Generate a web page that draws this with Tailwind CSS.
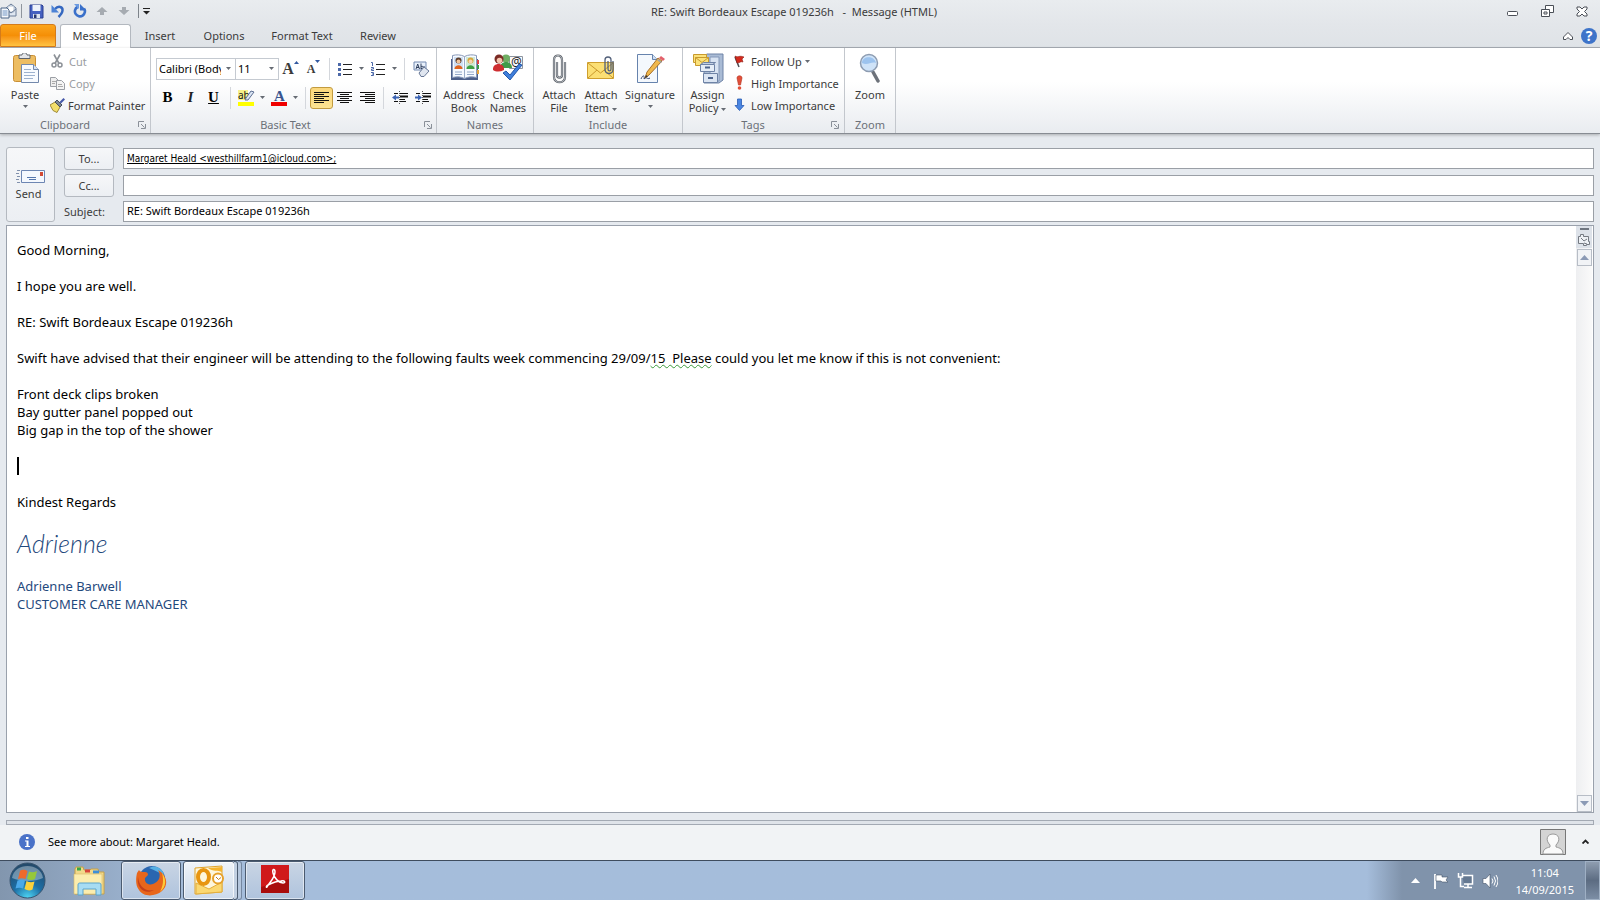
<!DOCTYPE html>
<html lang="en">
<head>
    <meta charset="UTF-8">
    <meta name="viewport" content="width=device-width, initial-scale=1.0">
    <title>RE: Swift Bordeaux Escape 019236h - Message (HTML)</title>
    <script src="https://cdn.jsdelivr.net/npm/@tailwindcss/browser@4"></script>
</head>
<body class="h-screen flex flex-col overflow-hidden bg-[#e6eaef] font-['Noto_Sans','Open_Sans',sans-serif] text-[11px] leading-[13px] text-[#3b3b3b]">
    <!-- Shared shapes -->
    <svg class="hidden">
        <symbol id="caret" viewBox="0 0 5 3"><path d="M0 0h5L2.500 3z" fill="#666b73"/></symbol>
        <symbol id="launcher" viewBox="0 0 8 8"><path d="M.5 6V.5H6" fill="none" stroke="#8a9099"/><path d="M3 3l3.500 3.500" stroke="#8a9099"/><path d="M7.500 3v4.500H3" fill="none" stroke="#8a9099"/></symbol>
    </svg>

    <!-- Title bar -->
    <header class="flex h-6 shrink-0 items-center bg-linear-to-b from-[#e9ecef] to-[#e3e6ea] pb-0.5">
        <div class="flex flex-1 items-center">
            <svg class="w-[17px] h-4" viewBox="0 0 17 16"><path d="M6 5l5-4 5 4v8H6z" fill="#dfe7f2" stroke="#6a7c98"/><path d="M8 3h6v6H8z" fill="#fff" stroke="#9aa9bf" stroke-width=".7"/><path d="M6 6l5 4 5-4" fill="none" stroke="#6a7c98"/><path d="M1 5h6l2 2v8H1z" fill="#f5f8fc" stroke="#4d6688"/><path d="M2.500 8h5M2.500 10h5M2.500 12h5" stroke="#6f94c4"/></svg>
            <span class="ml-1 mr-[3px] h-3.5 w-px bg-[#8f959d]"></span>
            <button class="w-[22px] flex justify-center" aria-label="Save"><svg class="size-[15px]" viewBox="0 0 15 15"><path d="M1 1h12l1 1v12H1z" fill="#4560c0" stroke="#2b3e90"/><path d="M3.500 1h8v6h-8z" fill="#eef3fb"/><path d="M4 10h7v4H4z" fill="#dce3ef"/><path d="M5 10.500h2.500V14H5z" fill="#27366f"/></svg></button>
            <button class="w-[22px] flex justify-center" aria-label="Undo"><svg class="size-[14px]" viewBox="0 0 14 14"><path d="M4 5C7 1.500 12 2.500 11.500 6.500 11.300 9 9 11.500 7.500 13" fill="none" stroke="#3568c0" stroke-width="2.500"/><path d="M.5 1v7.500H8z" fill="#4d83d6"/></svg></button>
            <button class="w-[22px] flex justify-center" aria-label="Repeat"><svg class="size-[14px]" viewBox="0 0 14 14"><path d="M4.500 3A5 5 0 1 0 11 4.500" fill="none" stroke="#3a70ca" stroke-width="2.600"/><path d="M7 0v6.500h6.500z" fill="#3a70ca"/><path d="M1 0h5v5z" fill="#6b9ae0"/></svg></button>
            <button class="w-[22px] flex justify-center" aria-label="Previous item"><svg class="size-[12px]" viewBox="0 0 12 12"><path d="M6 2l5.500 5H8v3H4V7H.5z" fill="#a6abb1"/></svg></button>
            <button class="w-[22px] flex justify-center" aria-label="Next item"><svg class="size-[12px]" viewBox="0 0 12 12"><path d="M6 10L.5 5H4V2h4v3h3.500z" fill="#a6abb1"/></svg></button>
            <span class="ml-[3px] h-3.5 w-px bg-[#7d838a]"></span>
            <button class="ml-1" aria-label="Customise toolbar"><svg class="w-[7px] h-[7px]" viewBox="0 0 7 7"><path d="M0 .5h7" stroke="#222"/><path d="M0 3h7L3.500 6.500z" fill="#222"/></svg></button>
        </div>
        <h1 class="whitespace-pre">RE: Swift Bordeaux Escape 019236h   -  Message (HTML)</h1>
        <div class="flex flex-1 items-center justify-end gap-[22px] pr-3">
            <button aria-label="Minimise"><svg class="w-[13px] h-3" viewBox="0 0 13 12"><rect x="1.500" y="6.500" width="10" height="4" rx="1" fill="#fff" stroke="#4a4f57"/></svg></button>
            <button aria-label="Restore"><svg class="w-[13px] h-3" viewBox="0 0 13 12"><path d="M4.500.5h8v7h-8z" fill="#fff" stroke="#4a4f57"/><path d="M.5 4.500h8v7h-8z" fill="#fff" stroke="#4a4f57"/><path d="M3 7h3v2H3z" fill="none" stroke="#4a4f57"/></svg></button>
            <button aria-label="Close"><svg class="w-[12px] h-[11px]" viewBox="0 0 12 11"><path d="M1 1h3l2 2 2-2h3v2L8.500 5.500 11 8v2H8L6 8l-2 2H1V8l2.500-2.500L1 3z" fill="#fff" stroke="#4a4f57"/></svg></button>
        </div>
    </header>

    <!-- Ribbon tabs -->
    <nav class="flex h-6 shrink-0 items-stretch border-b border-[#a9aeb5] bg-linear-to-b from-[#e3e6ea] to-[#dfe3e7]">
        <button class="w-14 rounded-t-[3px] border border-[#d47b1a] bg-linear-to-b from-[#fba51a] via-[#f58f06] to-[#ffc341] text-white">File</button>
        <button class="-mb-px ml-1 w-[71px] rounded-t-[3px] border border-b-0 border-[#b3b8bf] bg-white pb-0.5">Message</button>
        <button class="w-[58px]">Insert</button>
        <button class="w-[70px]">Options</button>
        <button class="w-[86px]">Format Text</button>
        <button class="w-[66px]">Review</button>
        <div class="ml-auto flex items-center gap-2 pr-[3px]">
            <button aria-label="Minimise the ribbon"><svg class="w-[10px] h-2" viewBox="0 0 10 8"><path d="M5 .5L9.500 5v2.500H7L5 5.500l-2 2H.5V5z" fill="#fff" stroke="#4a4f57"/></svg></button>
            <button class="size-4 rounded-full bg-[#3e74c9] text-[14px] font-bold leading-4 text-white" aria-label="Help">?</button>
        </div>
    </nav>

    <!-- Ribbon -->
    <section class="flex h-[86px] shrink-0 border-b border-[#878c93] bg-linear-to-b from-white from-40% to-[#e9ecf0] shadow-[0_1px_3px_#0004]">
        <div class="flex w-[151px] flex-col border-r border-[#c3c7cd]">
            <div class="flex flex-1">
                <button class="flex w-[50px] flex-col items-center pt-[5px]">
                    <svg class="size-8" viewBox="0 0 32 32"><rect x="4.500" y="2.500" width="22" height="26" rx="2" fill="#edbd62" stroke="#c98f35"/><path d="M10 5.500V2h3c0-3 5-3 5 0h3v3.500z" fill="#e4e6e9" stroke="#5f646b"/><path d="M12.500 11.500h12l5 5V29.500H12.500z" fill="#f8fbff" stroke="#7389ac"/><path d="M24.500 11.500v5h5" fill="#d8e4f4" stroke="#7389ac"/><path d="M15 16.500h7M15 19.500h11M15 22.500h11M15 25.500h9" stroke="#9db2cf"/></svg>
                    <span class="mt-[3px]">Paste</span>
                    <svg class="mt-1 w-[5px] h-[3px]"><use href="#caret"/></svg>
                </button>
                <div class="flex flex-col pt-0.5">
                    <button class="flex h-[22px] items-center gap-[3px] text-[#9a9da1]">
                        <svg class="size-4" viewBox="0 0 16 16"><path d="M4 1.500l5 9M10 1.500l-5 9" stroke="#8c9197" stroke-width="1.600"/><circle cx="4" cy="12" r="2" fill="none" stroke="#8c9197" stroke-width="1.500"/><circle cx="10" cy="12" r="2" fill="none" stroke="#8c9197" stroke-width="1.500"/></svg>Cut</button>
                    <button class="flex h-[22px] items-center gap-[3px] text-[#9a9da1]">
                        <svg class="size-4" viewBox="0 0 16 16"><path d="M.5 2.500h5l3 3v6h-8z" fill="#eee" stroke="#9b9fa5"/><path d="M2 6.500h4M2 8.500h3" stroke="#aaa"/><path d="M6.500 5.500h5l3 3v6h-8z" fill="#f4f4f4" stroke="#9b9fa5"/><path d="M8 9.500h4M8 11.500h5" stroke="#aaa"/></svg>Copy</button>
                    <button class="flex h-[22px] items-center gap-[2px] whitespace-nowrap">
                        <svg class="size-4" viewBox="0 0 16 16"><path d="M0 8l5-3 5 5-3 5.500-4-2z" fill="#f3df6a" stroke="#9f8a37"/><path d="M5 5l2-2 5 5-2 2z" fill="#7c8694" stroke="#474f5e"/><path d="M9.500 5l4-4L15 2.500l-4 4z" fill="#4557a8"/></svg>Format Painter</button>
                </div>
            </div>
            <div class="flex h-[17px] items-center text-[#6b7078]"><span class="flex-1 text-center pr-2">Clipboard</span><svg class="mr-1 size-2"><use href="#launcher"/></svg></div>
        </div>

        <div class="flex w-[286px] flex-col border-r border-[#c3c7cd]">
            <div class="flex-1 pl-[5px] pt-[9px]">
                <div class="flex h-[23px] items-center">
                    <label class="relative flex h-[22px] w-20 border border-[#c5cad1] bg-white text-black">
                        <select class="w-[64px] appearance-none overflow-hidden whitespace-nowrap pl-[2px] outline-none" aria-label="Font"><option>Calibri (Body)</option></select>
                        <svg class="absolute right-1 top-2 w-[5px] h-[3px]"><use href="#caret"/></svg>
                    </label>
                    <label class="relative -ml-px flex h-[22px] w-11 border border-[#c5cad1] bg-white text-black">
                        <select class="w-[28px] appearance-none pl-[2px] outline-none" aria-label="Font size"><option>11</option></select>
                        <svg class="absolute right-1 top-2 w-[5px] h-[3px]"><use href="#caret"/></svg>
                    </label>
                    <button class="flex w-[23px] items-start justify-center font-['Liberation_Serif',serif] text-[16px] font-bold leading-[20px]" aria-label="Grow font">A<svg class="mt-0.5 w-[5px] h-[3px]" viewBox="0 0 5 3"><path d="M0 3h5L2.500 0z" fill="#31589f"/></svg></button>
                    <button class="flex w-[23px] items-start justify-center font-['Liberation_Serif',serif] text-[12px] font-bold leading-[22px]" aria-label="Shrink font">A<svg class="mt-0.5 w-[5px] h-[3px]" viewBox="0 0 5 3"><path d="M0 0h5L2.500 3z" fill="#31589f"/></svg></button>
                    <span class="flex w-2 justify-center"><i class="h-[22px] w-px bg-[#d4d7dc]"></i></span>
                    <button class="flex w-[33px] items-center gap-[7px] pl-[5px]" aria-label="Bullets"><svg class="size-[14px]" viewBox="0 0 14 14"><path d="M0 1h3v3H0zM0 6h3v3H0zM0 11h3v3H0z" fill="#4c68a8"/><path d="M5 2.500h9M5 7.500h9M5 12.500h9" stroke="#222"/></svg><svg class="w-[5px] h-[3px]"><use href="#caret"/></svg></button>
                    <button class="flex w-[33px] items-center gap-[7px] pl-[5px]" aria-label="Numbering"><svg class="size-[14px]" viewBox="0 0 14 14"><path d="M0 .5h1.500V4M0 5.500h2.500v1.500H.5v1.500H3M0 10.500h2.500v3H0M1 12h1.500" fill="none" stroke="#4c68a8"/><path d="M5 2.500h9M5 7.500h9M5 12.500h9" stroke="#222"/></svg><svg class="w-[5px] h-[3px]"><use href="#caret"/></svg></button>
                    <span class="flex w-[11px] justify-center"><i class="h-[22px] w-px bg-[#d4d7dc]"></i></span>
                    <button class="flex w-[23px] justify-center" aria-label="Clear formatting"><svg class="w-[17px] h-4" viewBox="0 0 17 16"><path d="M1 1h12v8H1z" fill="#e8f0fb" stroke="#7289b0"/><path d="M3 8l1.700-5L6.500 8M3.500 6.500h2.500M8 2.500V8M8 5.500c3-1 3 2.500 0 2M11 5v3" fill="none" stroke="#31415f"/><path d="M6 12l5-6 5 4-5 5.500H8z" fill="#e0e6f0" stroke="#687896"/></svg></button>
                </div>
                <div class="mt-[6px] flex h-[23px] items-center">
                    <button class="w-[23px] font-['Liberation_Serif',serif] text-[15px] font-bold text-black">B</button>
                    <button class="w-[23px] font-['Liberation_Serif',serif] text-[15px] font-bold italic text-[#222]">I</button>
                    <button class="w-[23px] font-['Liberation_Serif',serif] text-[15px] font-bold text-black underline">U</button>
                    <span class="flex w-[10px] justify-center"><i class="h-[22px] w-px bg-[#d4d7dc]"></i></span>
                    <button class="flex w-[33px] items-center gap-[6px] pl-[3px]" aria-label="Text highlight colour"><svg class="w-4 h-[18px] overflow-visible" viewBox="0 0 16 18"><path d="M0 1h10v10H0z" fill="#f6f08a"/><text x="0" y="10" font-size="10" fill="#111">ab</text><path d="M8 9l5-7 3 1-6 8H7z" fill="#dbe5f4" stroke="#5d6f92"/><path d="M0 13h16v4H0z" fill="#ff0"/></svg><svg class="w-[5px] h-[3px]"><use href="#caret"/></svg></button>
                    <button class="flex w-[33px] items-center gap-[6px] pl-[3px]" aria-label="Font colour"><svg class="w-4 h-[18px] overflow-visible" viewBox="0 0 16 18"><text x="3" y="12" font-family="Liberation Serif" font-size="15" font-weight="bold" fill="#38558f">A</text><path d="M0 13h16v4H0z" fill="#f00000"/></svg><svg class="w-[5px] h-[3px]"><use href="#caret"/></svg></button>
                    <span class="flex w-[9px] justify-center"><i class="h-[22px] w-px bg-[#d4d7dc]"></i></span>
                    <button class="flex h-[22px] w-[23px] items-center justify-center rounded-[3px] border border-[#c29b3f] bg-linear-to-b from-[#fbd77c] to-[#fce391]" aria-label="Align left"><svg class="w-[15px] h-[12px]" viewBox="0 0 15 12"><path d="M0 .5h15M0 2.500h10M0 4.500h15M0 6.500h10M0 8.500h15M0 10.500h10" stroke="#111"/></svg></button>
                    <button class="flex w-[23px] justify-center" aria-label="Centre"><svg class="w-[15px] h-[12px]" viewBox="0 0 15 12"><path d="M0 .5h15M3 2.500h9M0 4.500h15M3 6.500h9M0 8.500h15M3 10.500h9" stroke="#111"/></svg></button>
                    <button class="flex w-[23px] justify-center" aria-label="Align right"><svg class="w-[15px] h-[12px]" viewBox="0 0 15 12"><path d="M0 .5h15M5 2.500h10M0 4.500h15M5 6.500h10M0 8.500h15M5 10.500h10" stroke="#111"/></svg></button>
                    <span class="flex w-[9px] justify-center"><i class="h-[22px] w-px bg-[#d4d7dc]"></i></span>
                    <button class="flex w-[23px] justify-center" aria-label="Decrease indent"><svg class="w-4 h-[14px]" viewBox="0 0 16 14"><path d="M2 2.500h4M8 2.500h8M2 10.500h4M8 10.500h6M8 8.500h5" stroke="#111"/><path d="M8 5.500h8" stroke="#111" stroke-width="2"/><path d="M7.500 0v14" stroke="#555" stroke-dasharray="1 1"/><path d="M0 6.500l4-3v2h3v2H4v2z" fill="#3c64b4"/></svg></button>
                    <button class="flex w-[23px] justify-center" aria-label="Increase indent"><svg class="w-4 h-[14px]" viewBox="0 0 16 14"><path d="M1 2.500h4M8 2.500h8M1 10.500h4M8 10.500h6M8 8.500h5" stroke="#111"/><path d="M8 5.500h8" stroke="#111" stroke-width="2"/><path d="M7.500 0v14" stroke="#555" stroke-dasharray="1 1"/><path d="M7 6.500l-4-3v2H0v2h3v2z" fill="#3c64b4"/></svg></button>
                </div>
            </div>
            <div class="flex h-[17px] items-center text-[#6b7078]"><span class="flex-1 pr-1 text-center">Basic Text</span><svg class="mr-1 size-2"><use href="#launcher"/></svg></div>
        </div>

        <div class="flex w-[97px] flex-col border-r border-[#c3c7cd]">
            <div class="flex flex-1 justify-center pt-[5px]">
                <button class="flex w-[46px] flex-col items-center">
                    <svg class="size-8" viewBox="0 0 32 32"><path d="M3 6h27v21H3z" fill="#4d5f8a"/><path d="M29 7h2v4h-2z" fill="#d44"/><path d="M29 12h2v4h-2z" fill="#3a9a4a"/><path d="M29 17h2v4h-2z" fill="#e8a23a"/><path d="M4.500 2.500c4-1 8-1 12 1 4-2 8-2 12-1v22c-4-1-8-1-12 1-4-2-8-2-12-1z" fill="#f7faff" stroke="#8798b8"/><path d="M16.500 3.500v22" stroke="#9aabc7"/><rect x="6" y="4" width="9" height="12" fill="#cfe0f4"/><rect x="18" y="4" width="9" height="12" fill="#cfe8d6"/><circle cx="10.500" cy="7.500" r="3" fill="#5b3c2a"/><circle cx="10.500" cy="8.500" r="2" fill="#f0c49c"/><path d="M6.500 16c0-5 8-5 8 0z" fill="#e0641f"/><circle cx="22.500" cy="7.500" r="3" fill="#d8a53b"/><circle cx="22.500" cy="8.500" r="2" fill="#f5d3b0"/><path d="M18.500 16c0-5 8-5 8 0z" fill="#3f9e43"/><path d="M7 19h7M7 21.500h7M19 19h7M19 21.500h7" stroke="#94a8c8"/></svg>
                    <span class="mt-[3px]">Address<br>Book</span>
                </button>
                <button class="flex w-[42px] flex-col items-center">
                    <svg class="size-8" viewBox="0 0 32 32"><path d="M17.500 3.500h13v12h-13z" fill="#f8f9fb" stroke="#8d949f"/><circle cx="14" cy="5.500" r="4" fill="#6fae63"/><path d="M8 15c0-8 12-8 12 0z" fill="#3f9b4a"/><circle cx="7" cy="6" r="4.500" fill="#7b2b25"/><circle cx="7.500" cy="7.500" r="2.800" fill="#f4c5ae"/><path d="M1 17c-1-8 12-8 11 0-4 2-8 2-11 0z" fill="#cf2e31"/><text x="19" y="13" font-size="12" fill="#222">@</text><path d="M11 20l3-2 4 4L27 11l3 1-12 15z" fill="#3f7fdc" stroke="#2458ab"/></svg>
                    <span class="mt-[3px]">Check<br>Names</span>
                </button>
            </div>
            <div class="h-[17px] text-center leading-[17px] text-[#6b7078]">Names</div>
        </div>

        <div class="flex w-[149px] flex-col border-r border-[#c3c7cd]">
            <div class="flex flex-1 pl-1 pt-[5px]">
                <button class="flex w-[42px] flex-col items-center">
                    <svg class="size-8" viewBox="0 0 32 32"><path d="M14 9v13c0 3.500 5 3.500 5 0V7c0-6-8-6-8 0v17c0 7 11 7 11 0V9" fill="none" stroke="#5d6269" stroke-width="2.200"/><path d="M14 9v13c0 3.500 5 3.500 5 0V7c0-6-8-6-8 0v17c0 7 11 7 11 0V9" fill="none" stroke="#c9ced4" stroke-width=".8"/></svg>
                    <span class="mt-[3px]">Attach<br>File</span>
                </button>
                <button class="flex w-[42px] flex-col items-center">
                    <svg class="size-8" viewBox="0 0 32 32"><path d="M2.500 9.500h26v16h-26z" fill="#fbdf74" stroke="#cf9f2e"/><path d="M3 25l9-8M28 25l-9-8M3 10l12.500 10L28 10" fill="none" stroke="#c9982c"/><path d="M23 8v8c0 2.500 3 2.500 3 0V7c0-4-6-4-6 0v9c0 6 8 6 8 0V8" fill="none" stroke="#52607a" stroke-width="1.300"/></svg>
                    <span class="mt-[3px]">Attach<br>Item <svg class="inline w-[5px] h-[3px] align-middle"><use href="#caret"/></svg></span>
                </button>
                <button class="flex w-[56px] flex-col items-center">
                    <svg class="size-8" viewBox="0 0 32 32"><path d="M3.500 1.500h15l5 5v23h-20z" fill="#f4f8fd" stroke="#6683ad"/><path d="M18.500 1.500v5h5" fill="#cfdff2" stroke="#6683ad"/><path d="M7 26c2-5 4-3 3 0 3-3 3 1 6-1" fill="none" stroke="#3a4b78"/><path d="M11 25l2-6L24 5l4 3-13 14z" fill="#f0b84c" stroke="#a8702a"/><path d="M25 5l2-2 4 3-2 2z" fill="#e3606b"/><path d="M23.500 6.500l4 3" stroke="#9aa3ad" stroke-width="1.500"/><path d="M11 25l1-3 2 1.500z" fill="#333"/></svg>
                    <span class="mt-[3px]">Signature</span>
                    <svg class="mt-1 w-[5px] h-[3px]"><use href="#caret"/></svg>
                </button>
            </div>
            <div class="h-[17px] text-center leading-[17px] text-[#6b7078]">Include</div>
        </div>

        <div class="flex w-[162px] flex-col border-r border-[#c3c7cd]">
            <div class="flex flex-1">
                <button class="flex w-[49px] flex-col items-center pt-[5px]">
                    <svg class="size-8" viewBox="0 0 32 32"><path d="M12 3l3-2h16v26l-4 3H12z" fill="#a9bbd5" stroke="#6e83a6"/><path d="M18 4h9v24h-9z" fill="#d8e3f2" stroke="#8397b8"/><path d="M1.500 1.500h13v8h-13z" fill="#fbe27b" stroke="#c99a2d"/><path d="M3.500 4.500h13v8h-13z" fill="#fbe27b" stroke="#c99a2d"/><path d="M3.500 4.500l6.500 5 6.500-5" fill="none" stroke="#c99a2d"/><path d="M8.500 11.500l3-2h12l-3 2z" fill="#c2d0e4" stroke="#6e83a6"/><path d="M8.500 11.500h14v7h-14z" fill="#e5edf7" stroke="#6e83a6"/><path d="M13 14.500h5" stroke="#4d648c" stroke-width="2"/><path d="M11.500 20.500h14v9h-14z" fill="#dbe5f3" stroke="#6e83a6"/><path d="M16 25h5" stroke="#4d648c" stroke-width="2"/></svg>
                    <span class="mt-[3px]">Assign<br>Policy <svg class="inline w-[5px] h-[3px] align-middle"><use href="#caret"/></svg></span>
                </button>
                <div class="flex flex-col whitespace-nowrap pt-0.5">
                    <button class="flex h-[22px] items-center gap-[3px]">
                        <svg class="size-4" viewBox="0 0 16 16"><path d="M3 4l4 10" stroke="#4d4d55" stroke-width="1.500"/><path d="M3 3c3 2 4-1 9 1l-2 2 1 3c-3-1-3 1-6 1z" fill="#d3291c" stroke="#8e1c14" stroke-width=".6"/></svg>Follow Up <svg class="w-[5px] h-[3px]"><use href="#caret"/></svg></button>
                    <button class="flex h-[22px] items-center gap-[3px]">
                        <svg class="size-4" viewBox="0 0 16 16"><path d="M5 3c0-3 5-3 5 0L8.500 10h-2z" fill="#e2503a" stroke="#b2301f" stroke-width=".6"/><circle cx="7.500" cy="13" r="1.800" fill="#e2503a"/></svg>High Importance</button>
                    <button class="flex h-[22px] items-center gap-[3px]">
                        <svg class="size-4" viewBox="0 0 16 16"><path d="M5.500 2h4v6.500h2.500L7.500 13.500 3 8.500h2.500z" fill="#4a86e2" stroke="#2a5cb4" stroke-width=".8"/></svg>Low Importance</button>
                </div>
            </div>
            <div class="flex h-[17px] items-center text-[#6b7078]"><span class="flex-1 pr-2 text-center">Tags</span><svg class="mr-[5px] size-2"><use href="#launcher"/></svg></div>
        </div>

        <div class="flex w-[51px] flex-col border-r border-[#c3c7cd]">
            <button class="flex flex-1 flex-col items-center pt-[5px]">
                <svg class="size-8" viewBox="0 0 32 32"><path d="M19 19l5 9" stroke="#6d727a" stroke-width="3.500" stroke-linecap="round"/><circle cx="15" cy="10" r="8.500" fill="#cfe3f8" stroke="#8d9cb1" stroke-width="1.500"/><path d="M8 10c0-7 12-8 14 0-5-2-8 3-14 0z" fill="#9cc3ee"/></svg>
                <span class="mt-[3px]">Zoom</span>
            </button>
            <div class="h-[17px] text-center leading-[17px] text-[#6b7078]">Zoom</div>
        </div>
    </section>

    <!-- Message header fields -->
    <form class="flex shrink-0 gap-[9px] px-[6px] pt-[13px] pb-[3px]">
        <button type="button" class="flex h-[75px] w-[49px] flex-col items-center justify-center rounded-[3px] border border-[#b4b9c0] bg-linear-to-b from-[#f6f7f9] to-[#eceff3]">
            <svg class="h-[15px] w-[30px]" viewBox="0 0 30 15"><path d="M1 1.500h3M0 4.500h3M1 7.500h3M0 10.500h3M1 13.500h3" stroke="#8191ad"/><path d="M5.500 1.500h23v12h-23z" fill="#f4f8fe" stroke="#6d86b3"/><path d="M11 8.500h9M13 10.500h7" stroke="#5577ad"/><path d="M24 3h3v4h-3z" fill="#d24a35"/></svg>
            <span class="mt-[3px] pr-1">Send</span>
        </button>
        <div class="grid flex-1 grid-cols-[50px_1fr] items-center gap-x-[9px] gap-y-[3px]">
            <button type="button" class="h-[23px] rounded-[3px] border border-[#b4b9c0] bg-linear-to-b from-[#f6f7f9] to-[#eceff3]">To...</button>
            <input class="h-[21px] border border-[#9a9fa6] bg-white px-[3px] font-['DejaVu_Sans_Condensed','DejaVu_Sans',sans-serif] text-[10px] text-black underline outline-none" aria-label="To" value="Margaret Heald &lt;westhillfarm1@icloud.com&gt;;">
            <button type="button" class="h-[23px] rounded-[3px] border border-[#b4b9c0] bg-linear-to-b from-[#f6f7f9] to-[#eceff3]">Cc...</button>
            <input class="h-[21px] border border-[#9a9fa6] bg-white px-[3px] text-black outline-none" aria-label="Cc">
            <label for="subject">Subject:</label>
            <input id="subject" class="h-[21px] border border-[#9a9fa6] bg-white px-[3px] pb-0.5 text-black outline-none" value="RE: Swift Bordeaux Escape 019236h">
        </div>
    </form>

    <!-- Message body -->
    <main class="mx-[6px] flex min-h-0 flex-1 border border-[#9aa1ac] bg-white">
        <div class="flex-1 px-[10px] pt-[15px] text-[13px] leading-[18px] text-black outline-none" role="textbox" aria-multiline="true" aria-label="Message" contenteditable="true">
            <p>Good Morning,</p>
            <p class="mt-[18px]">I hope you are well.</p>
            <p class="mt-[18px]">RE: Swift Bordeaux Escape 019236h</p>
            <p class="mt-[18px]">Swift have advised that their engineer will be attending to the following faults week commencing 29/09/<span class="underline decoration-[#3a9a3a] decoration-wavy decoration-1">15&nbsp; Please</span> could you let me know if this is not convenient:</p>
            <p class="mt-[18px]">Front deck clips broken</p>
            <p>Bay gutter panel popped out</p>
            <p>Big gap in the top of the shower</p>
            <div class="mt-[18px] h-[18px] w-[2px] bg-black"></div>
            <p class="mt-[18px]">Kindest Regards</p>
            <p class="mt-[18px] font-[Lato,sans-serif] text-[25px] font-light italic leading-[28px] text-[#1f497d]">Adrienne</p>
            <p class="mt-[20px] text-[#1f497d]">Adrienne Barwell</p>
            <p class="text-[#1f497d]">CUSTOMER CARE MANAGER</p>
        </div>
        <div class="mr-px flex w-4 flex-col items-center bg-linear-to-r from-[#eeeff1] to-[#fafafa]" aria-hidden="true">
            <div class="flex w-full flex-col items-center bg-[#dde2e9] pb-0.5 pt-[2px]">
                <i class="h-[2px] w-[9px] bg-[#6f7680]"></i>
                <svg class="mt-1 size-3" viewBox="0 0 12 12"><path d="M.5 2.500h2v-2h3v2h5v5h1v3h-3v1h-3v-2h-5z" fill="#eef1f5" stroke="#757a82"/><path d="M3 4l3 3 3-2M6 9l3 1" fill="none" stroke="#757a82"/></svg>
            </div>
            <div class="mt-px flex h-[17px] w-[15px] items-center justify-center border border-[#b7bdc6] bg-[#f1f3f6]"><svg class="h-[5px] w-[9px]" viewBox="0 0 9 5"><path d="M0 5h9L4.500 0z" fill="#8b9ab5"/></svg></div>
            <div class="mt-auto flex h-[17px] w-[15px] items-center justify-center border border-[#b7bdc6] bg-[#f1f3f6]"><svg class="h-[5px] w-[9px]" viewBox="0 0 9 5"><path d="M0 0h9L4.500 5z" fill="#8b9ab5"/></svg></div>
        </div>
    </main>

    <!-- People pane -->
    <div class="mx-[6px] mt-[7px] h-[5px] shrink-0 border border-[#a3a9b3] bg-[#dfe3e9]"></div>
    <section class="flex h-[35px] shrink-0 items-center bg-[#f1f3f5] pb-0.5 pl-[19px] pr-[11px] text-black">
        <svg class="size-4" viewBox="0 0 16 16"><circle cx="8" cy="8" r="8" fill="#4a72c8"/><path d="M7 3h2.500v2H7zM6 6.500h3.500V12H11v1H6v-1h1.500V7.500H6z" fill="#fff"/></svg>
        <span class="ml-[13px]">See more about: Margaret Heald.</span>
        <svg class="ml-auto size-[26px]" viewBox="0 0 26 26"><path d="M.5.5h25v25H.5z" fill="#d4d4d4" stroke="#777"/><path d="M3 25c0-5 3-6 7-7v-2c-5-5-3-11 3-11s8 6 3 11v2c4 1 7 2 7 7z" fill="#fafafa" stroke="#999"/></svg>
        <button class="ml-4" aria-label="Expand people pane"><svg class="h-[5px] w-[7px]" viewBox="0 0 7 5"><path d="M.5 4.500l3-3 3 3" fill="none" stroke="#222" stroke-width="1.800"/></svg></button>
    </section>

    <!-- Taskbar -->
    <footer class="flex h-10 shrink-0 items-stretch border-t border-[#3e4c5e] bg-linear-to-r from-[#8296ae] via-[#a5bddb] via-12% to-[#a5bddb] text-[11px] leading-[17px] text-white">
        <button class="ml-2 flex w-[38px] items-center justify-center" aria-label="Start">
            <svg class="size-[37px]" viewBox="0 0 37 37"><defs><radialGradient id="orb" cx=".5" cy="1" r=".95"><stop offset="0" stop-color="#4fd8f5"/><stop offset=".45" stop-color="#1c6fa6"/><stop offset="1" stop-color="#234a6c"/></radialGradient></defs><circle cx="18.500" cy="18.500" r="17.500" fill="url(#orb)" stroke="#38546f"/><path d="M3 16C5 0 32 0 34 16c-8 4-22 4-31 0z" fill="#fff" opacity=".35"/><path d="M11 9c3-2 5-1 7.500 0l-2 8c-2.500-1-5-1-7.500 0z" fill="#ee6a2c"/><path d="M20 9.500c2.500 1 5 1 8-.5l-2 8c-3 1.500-5 1-8 0z" fill="#96c83a"/><path d="M8.500 18.500c3-1 5-1 7.500 0l-2 8c-2.500-1-5-1-7.500 0z" fill="#4aa9ea"/><path d="M17.500 19c3 1.500 5 1.500 8 .5l-2 8c-3 1.500-5 1-8-.5z" fill="#fbd13c"/></svg>
        </button>
        <button class="ml-[27px] flex w-8 items-center" aria-label="Windows Explorer">
            <svg class="size-8" viewBox="0 0 32 32"><path d="M2 4l1-2h7l1 3h6l1-1h7l1 3h5v22H2z" fill="#f2d98a" stroke="#c4a049"/><path d="M4 2.500h4v3H4z" fill="#39a845"/><path d="M12 4.500h5v3h-5z" fill="#d8463a"/><path d="M20 5.500h6v3h-6z" fill="#3d8fd8"/><path d="M1 9h28v20H1z" fill="#fbedae" stroke="#d8bb66" stroke-width=".6"/><path d="M5 30V20c0-2 1-2 3-2h17c2 0 3 0 3 2v10h-5v-6H10v6z" fill="#a6dcf3" stroke="#5ba4cc"/></svg>
        </button>
        <button class="ml-4 flex w-[60px] items-center justify-center rounded-[3px] border border-[#4b5b70] bg-linear-to-b from-[#c9d5e4] to-[#afc3dd] shadow-[inset_0_0_0_1px_#fff8]" aria-label="Firefox">
            <svg class="size-8" viewBox="0 0 32 32"><circle cx="17" cy="14" r="13" fill="#2a66b0"/><path d="M14 3c6-4 14 0 15 7-5-2-9-5-15-7z" fill="#57b0e4"/><path d="M2 8l2-3c1 2 3 2 6 2 2 0 3 1 3 3l-3 3c-1 6 6 8 10 5 5-3 6-8 3-13 9 5 11 15 4 21S8 32 4 25C0 20 1 13 2 8z" fill="#e8661b"/><path d="M27 8c5 7 4 14-2 19 3-6 4-12 2-19z" fill="#fccb38"/><path d="M3 12c1 9 7 15 16 13-8 5-18-1-16-13z" fill="#c5401a"/></svg>
        </button>
        <button class="ml-[2px] flex w-[52px] items-center justify-center rounded-[3px] border border-[#4b5b70] bg-linear-to-b from-[#f0f4f9] to-[#ccdaeb] shadow-[inset_0_0_0_1px_#fffa]" aria-label="Outlook">
            <svg class="size-8" viewBox="0 0 32 32"><path d="M2 3l27-2v26l-27 2z" fill="#fdf6dc" stroke="#e0a328"/><path d="M3 18l13 6 13-7v10L3 29z" fill="#fbd871" stroke="#e3ae3c"/><path d="M15 3l14-1v5c-4-2-9 0-14-4z" fill="#f5b42e"/><ellipse cx="10.500" cy="12" rx="5.500" ry="7" fill="none" stroke="#e89510" stroke-width="4"/><circle cx="25" cy="13.500" r="5" fill="#fff" stroke="#e6a12a" stroke-width="2"/><path d="M23 12l2.500 2.500 2.500-2" fill="none" stroke="#c47f12"/></svg>
        </button>
        <span class="-ml-px w-1 rounded-r-[3px] border border-l-0 border-[#4b5b70] bg-[#c2d0e2]"></span>
        <span class="w-1 rounded-r-[3px] border border-l-0 border-[#7487a0] bg-[#b4c6dd]"></span>
        <button class="ml-[3px] flex w-[60px] items-center justify-center rounded-[3px] border border-[#4b5b70] bg-linear-to-b from-[#c9d5e4] to-[#afc3dd] pb-1 shadow-[inset_0_0_0_1px_#fff8]" aria-label="Adobe Reader">
            <svg class="size-7" viewBox="0 0 28 28"><path d="M0 0h28v28H0z" fill="#a90d0d"/><path d="M0 0h28v14L0 22z" fill="#d0191b"/><path d="M6 22c2-4 8-9 8-15 0-4-3-3-2 1 1 5 6 10 10 10 3 0 2-3-2-2-5 0-9 2-13 4-2 1-2 3-1 2z" fill="none" stroke="#fff" stroke-width="1.500"/></svg>
        </button>
        <div class="ml-auto flex items-center bg-linear-to-r from-transparent to-[#8093ab] to-15% pl-[44px]">
            <svg class="h-[5px] w-[9px]" viewBox="0 0 9 5"><path d="M0 5h9L4.500 0z" fill="#fff"/></svg>
            <svg class="ml-[13px] size-4" viewBox="0 0 16 16"><path d="M2 1v15" stroke="#fff" stroke-width="1.800"/><path d="M3 2h6v2h6l-2 3 2 2H9L8 8H3z" fill="#fff" stroke="#44546a" stroke-width=".6"/></svg>
            <svg class="ml-2 size-[17px]" viewBox="0 0 17 17"><path d="M5 3.500h10.500v8.500H7" fill="#647891" stroke="#fff" stroke-width="1.500"/><path d="M11 12v3M7 15.500h8" stroke="#fff" stroke-width="1.500"/><path d="M1.500 1v4h4V1M3.500 5v9.500H7" fill="none" stroke="#fff" stroke-width="1.500"/></svg>
            <svg class="ml-2 size-4" viewBox="0 0 16 16"><path d="M1 5.500h3L8 1v14l-4-4.500H1z" fill="#fff" stroke="#44546a" stroke-width=".6"/><path d="M10 5.500q2 2.500 0 5M12 3.500q3 4.500 0 9M14 2q4 6 0 12" fill="none" stroke="#fff"/></svg>
            <div class="ml-[17px] mr-[11px] text-center"><time>11:04</time><br><time>14/09/2015</time></div>
            <button class="w-[15px] self-stretch border border-[#9fb0c4] bg-linear-to-b from-[#8e9db0] via-[#5c6c82] to-[#7c8ea5]" aria-label="Show desktop"></button>
        </div>
    </footer>
</body>
</html>
